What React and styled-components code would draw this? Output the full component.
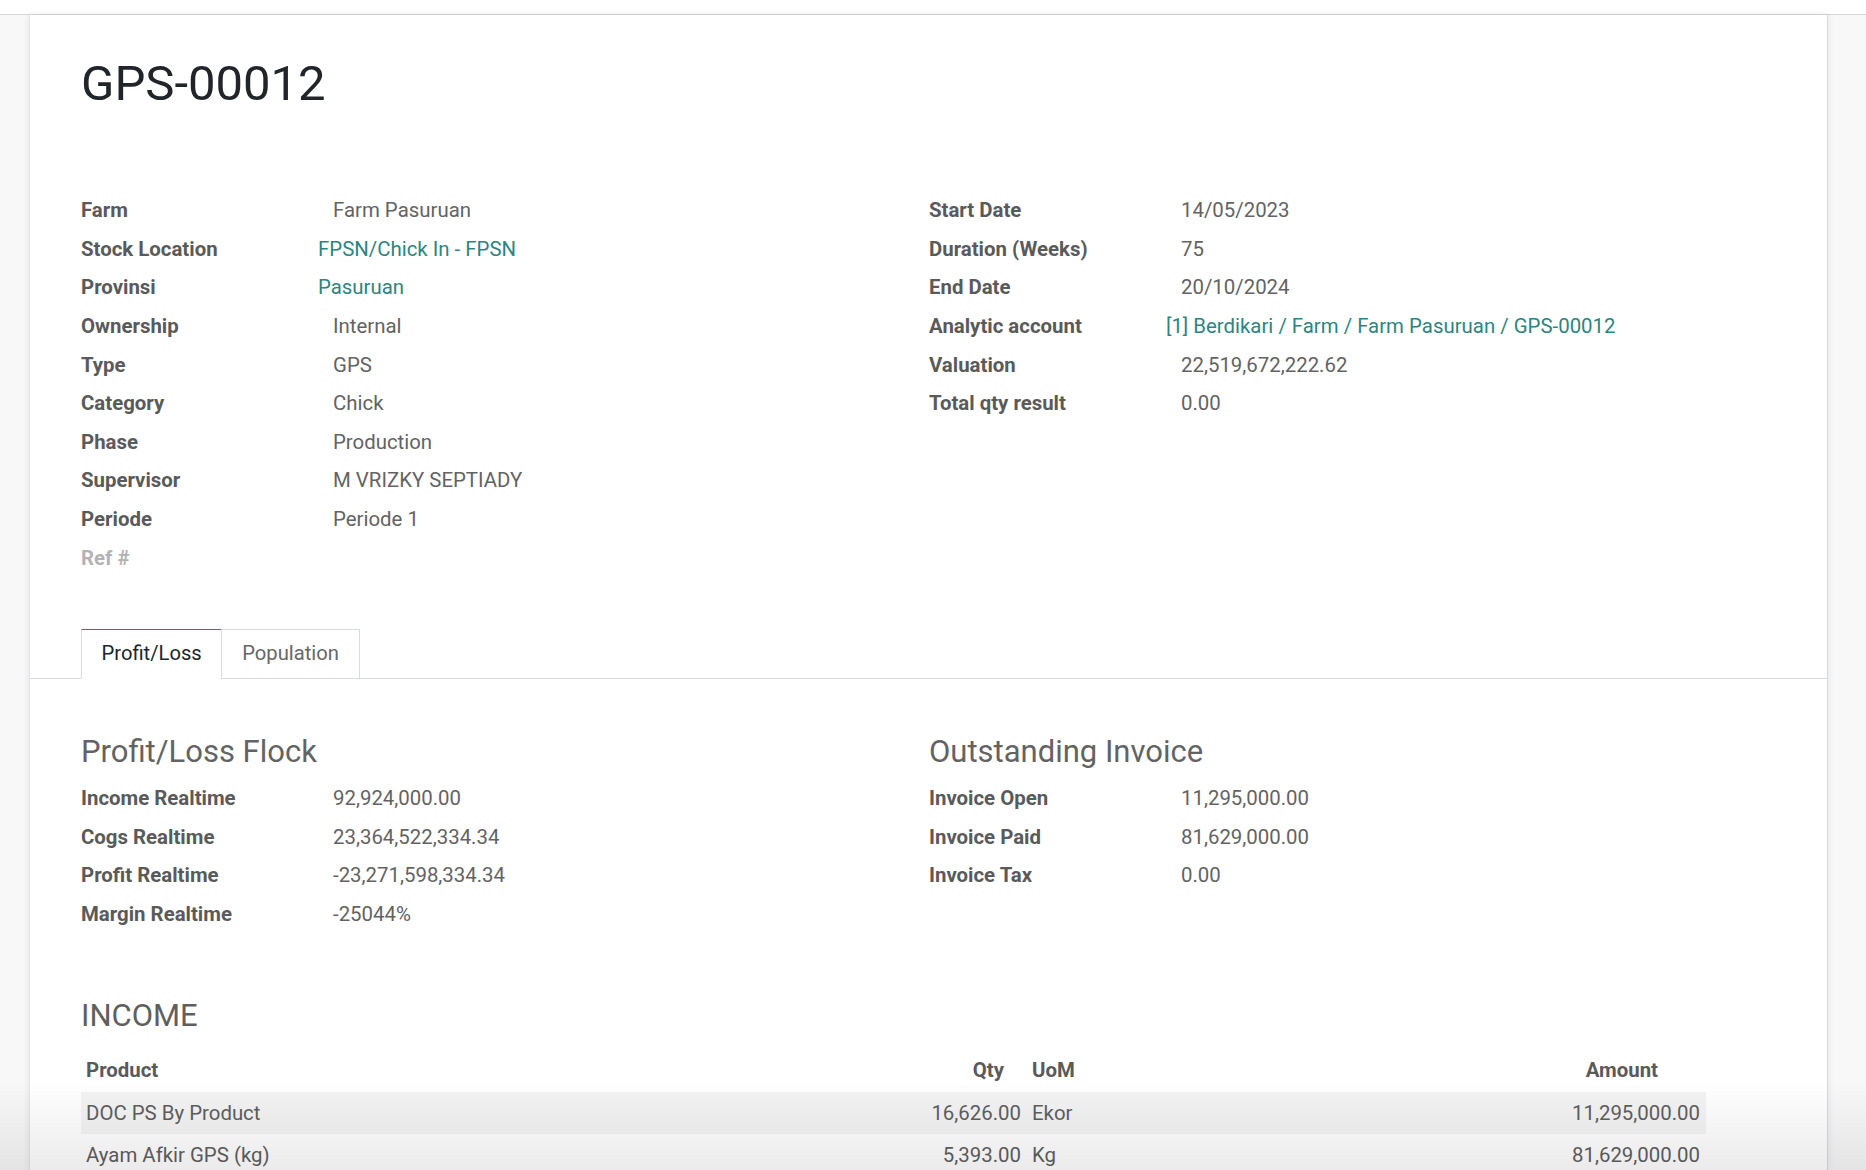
import React from 'react';
import styled, { createGlobalStyle } from 'styled-components';

const Global = createGlobalStyle`
  html, body { margin: 0; padding: 0; overflow: hidden; background: #fff; }
  body { font-family: Roboto, "Noto Sans", "Liberation Sans", Arial, sans-serif; -webkit-font-smoothing: antialiased; }
`;

const Page = styled.div`
  height: 1170px;
  display: flex;
  flex-direction: column;
`;

const TopBar = styled.div`
  flex: none;
  height: 14px;
  background: #fff;
  border-bottom: 1px solid #d6d6d6;
`;

const Workspace = styled.div`
  flex: 1;
  min-height: 0;
  display: flex;
  background: #f8f8f8;
  padding: 0 38px 0 29px;
`;

const Sheet = styled.div`
  flex: 1;
  background: #fff;
  border-left: 1px solid #e2e5e9;
  border-right: 1px solid #d6dbe1;
  box-shadow: 0 0 7px rgba(0, 0, 0, 0.09);
  padding: 39px 51px 0 51px;
`;

const Title = styled.h1`
  margin: 0;
  font-size: 49px;
  line-height: 59px;
  font-weight: 400;
  color: #212529;
`;

const TwoCols = styled.div`
  display: grid;
  grid-template-columns: 848px 1fr;
  margin-top: ${(p) => p.$top}px;
`;

const Group = styled.div`
  display: flex;
  flex-direction: column;
`;

const Row = styled.div`
  display: grid;
  grid-template-columns: 237px 1fr;
  align-items: center;
  height: 38.6px;
  font-size: 20.4px;
`;

const Label = styled.div`
  font-weight: 700;
  color: ${(p) => (p.$muted ? '#b3b3b3' : '#5a5a5a')};
  white-space: nowrap;
`;

const Value = styled.div`
  padding-left: ${(p) => (p.$link ? 0 : 15)}px;
  color: ${(p) => (p.$link ? '#2c8580' : '#636363')};
  white-space: nowrap;
`;

const TabNav = styled.div`
  display: flex;
  margin: 52px -51px 0 -51px;
  padding-left: 51px;
  border-bottom: 1px solid #d6dbe0;
`;

const Tab = styled.div`
  height: 50px;
  line-height: 47px;
  padding: 0 ${(p) => p.$px}px;
  font-size: 20.2px;
  box-sizing: border-box;
  margin-bottom: -1px;
  margin-left: ${(p) => (p.$first ? 0 : -1)}px;
  border: 1px solid #d6dbe0;
  border-top-color: ${(p) => (p.$active ? '#7b5c74' : '#d6dbe0')};
  border-bottom: 1px solid ${(p) => (p.$active ? '#fff' : '#d6dbe0')};
  background: #fff;
  color: ${(p) => (p.$active ? '#212529' : '#676767')};
`;

const SectionTitle = styled.h3`
  margin: 0 0 9px 0;
  font-size: 31px;
  line-height: 36px;
  font-weight: 400;
  color: #636363;
`;

const Income = styled.h3`
  margin: 65px 0 0 0;
  font-size: 31px;
  line-height: 36px;
  font-weight: 400;
  color: #5f5f5f;
`;

const Table = styled.table`
  margin-top: 14px;
  width: 1625px;
  border-collapse: collapse;
  table-layout: fixed;
  font-size: 20.4px;
`;

const Th = styled.th`
  width: ${(p) => (p.$w ? `${p.$w}px` : 'auto')};
  height: 44px;
  padding: 0 ${(p) => p.$pr || 6}px 0 ${(p) => p.$pl || 5}px;
  text-align: ${(p) => p.$align || 'left'};
  font-weight: 700;
  color: #5a5a5a;
  vertical-align: middle;
`;

const Tr = styled.tr`
  background: ${(p) => (p.$striped ? 'rgba(0,0,0,0.045)' : 'transparent')};
`;

const Td = styled.td`
  height: 42px;
  padding: 0 6px 0 5px;
  text-align: ${(p) => p.$align || 'left'};
  color: #5f5f5f;
  white-space: nowrap;
  vertical-align: middle;
`;

const BottomFade = styled.div`
  position: fixed;
  left: 0;
  right: 0;
  bottom: 0;
  height: 90px;
  pointer-events: none;
  background: linear-gradient(to bottom, rgba(0, 0, 0, 0), rgba(0, 0, 0, 0.08));
`;

const leftInfo = [
  ['Farm', 'Farm Pasuruan'],
  ['Stock Location', 'FPSN/Chick In - FPSN', true],
  ['Provinsi', 'Pasuruan', true],
  ['Ownership', 'Internal'],
  ['Type', 'GPS'],
  ['Category', 'Chick'],
  ['Phase', 'Production'],
  ['Supervisor', 'M VRIZKY SEPTIADY'],
  ['Periode', 'Periode 1'],
];

const rightInfo = [
  ['Start Date', '14/05/2023'],
  ['Duration (Weeks)', '75'],
  ['End Date', '20/10/2024'],
  ['Analytic account', '[1] Berdikari / Farm / Farm Pasuruan / GPS-00012', true],
  ['Valuation', '22,519,672,222.62'],
  ['Total qty result', '0.00'],
];

const profit = [
  ['Income Realtime', '92,924,000.00'],
  ['Cogs Realtime', '23,364,522,334.34'],
  ['Profit Realtime', '-23,271,598,334.34'],
  ['Margin Realtime', '-25044%'],
];

const invoice = [
  ['Invoice Open', '11,295,000.00'],
  ['Invoice Paid', '81,629,000.00'],
  ['Invoice Tax', '0.00'],
];

const income = [
  ['DOC PS By Product', '16,626.00', 'Ekor', '11,295,000.00'],
  ['Ayam Afkir GPS (kg)', '5,393.00', 'Kg', '81,629,000.00'],
];

function Field({ label, value, link, muted }) {
  return (
    <Row>
      <Label $muted={muted}>{label}</Label>
      <Value $link={link}>{value}</Value>
    </Row>
  );
}

export default function App() {
  return (
    <Page>
      <Global />
      <TopBar />
      <Workspace>
        <Sheet>
          <Title>GPS-00012</Title>
          <TwoCols $top={78}>
            <Group>
              {leftInfo.map(([l, v, link]) => (
                <Field key={l} label={l} value={v} link={link} />
              ))}
              <Field label="Ref #" value="" muted />
            </Group>
            <Group>
              {rightInfo.map(([l, v, link]) => (
                <Field key={l} label={l} value={v} link={link} />
              ))}
            </Group>
          </TwoCols>

          <TabNav>
            <Tab $active $first $px={19.5}>Profit/Loss</Tab>
            <Tab $px={20}>Population</Tab>
          </TabNav>

          <TwoCols $top={55}>
            <Group>
              <SectionTitle>Profit/Loss Flock</SectionTitle>
              {profit.map(([l, v]) => (
                <Field key={l} label={l} value={v} />
              ))}
            </Group>
            <Group>
              <SectionTitle>Outstanding Invoice</SectionTitle>
              {invoice.map(([l, v]) => (
                <Field key={l} label={l} value={v} />
              ))}
            </Group>
          </TwoCols>

          <Income>INCOME</Income>
          <Table>
            <thead>
              <tr>
                <Th $w={737}>Product</Th>
                <Th $w={170} $align="right" $pr={23}>Qty</Th>
                <Th $w={312}>UoM</Th>
                <Th $align="right" $pr={48}>Amount</Th>
              </tr>
            </thead>
            <tbody>
              {income.map(([p, q, u, a], i) => (
                <Tr key={p} $striped={i === 0}>
                  <Td>{p}</Td>
                  <Td $align="right">{q}</Td>
                  <Td>{u}</Td>
                  <Td $align="right">{a}</Td>
                </Tr>
              ))}
            </tbody>
          </Table>
        </Sheet>
      </Workspace>
      <BottomFade />
    </Page>
  );
}
